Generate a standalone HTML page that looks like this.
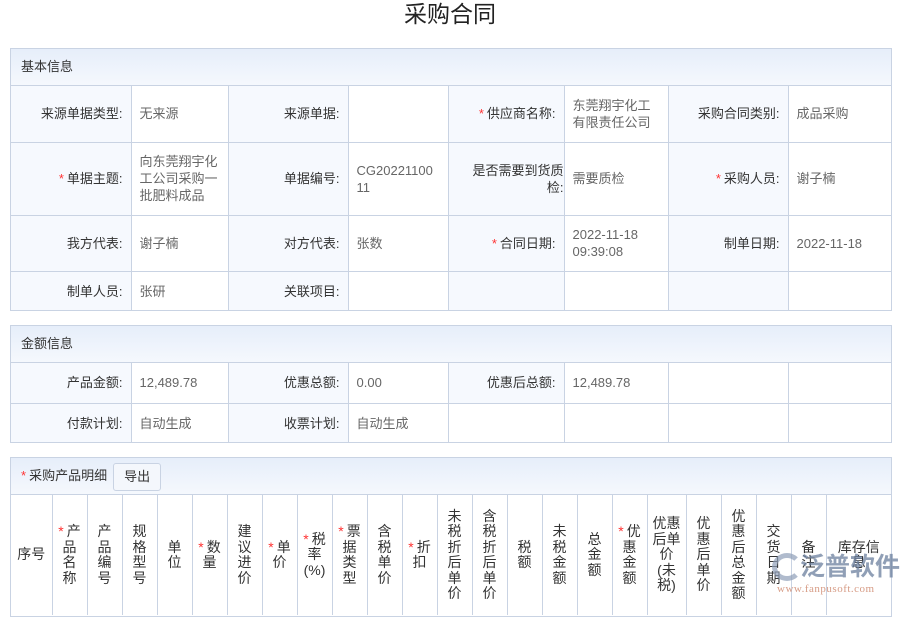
<!DOCTYPE html>
<html><head><meta charset="utf-8"><style>
*{margin:0;padding:0;box-sizing:border-box}
body{width:900px;height:600px;overflow:hidden;background:#fff;font-family:"Liberation Sans","Noto Sans CJK SC",sans-serif;font-size:13px;color:#333;position:relative}
.title{position:absolute;left:0;width:900px;top:0;text-align:center;font-size:23px;line-height:28px;color:#222}
.sec{position:absolute;left:10px;width:882px;border:1px solid #c9d3e3;background:#fff;overflow:hidden}
.hd{height:37px;line-height:36px;padding-left:10px;background:linear-gradient(#e6eefa,#f5f8fd);border-bottom:1px solid #c9d3e3;font-size:13px;color:#333}
table{border-collapse:collapse;table-layout:fixed;width:880px}
td{border:1px solid #c9d3e3;vertical-align:middle;line-height:17px}
td.l{background:#f6f9fe;text-align:right;padding-right:8px;color:#333}
td.v{background:#fff;padding-left:8px;padding-right:6px;color:#666}
tr td:first-child{border-left:none}
tr td:last-child{border-right:none}
tr:last-child td{border-bottom:none}
tr:first-child td{border-top:none}
.s{color:#f33;margin-right:3px}
.ph td{text-align:center;font-size:14px;line-height:15.5px;padding:0 4px;color:#333;height:120px;word-break:break-all}
.btn{display:inline-block;border:1px solid #c9d3e3;border-radius:3px;background:#f4f7fc;padding:0 10px;height:28px;line-height:26px;margin-left:6px;vertical-align:middle}
</style></head><body>
<div class="title">采购合同</div>

<div class="sec" style="top:48px;height:263px">
<div class="hd">基本信息</div>
<table>
<colgroup><col style="width:120px"><col style="width:97px"><col style="width:120px"><col style="width:100px"><col style="width:116px"><col style="width:104px"><col style="width:120px"><col style="width:103px"></colgroup>
<tr style="height:56px"><td class="l">来源单据类型:</td><td class="v">无来源</td><td class="l">来源单据:</td><td class="v"></td><td class="l"><span class="s">*</span>供应商名称:</td><td class="v">东莞翔宇化工有限责任公司</td><td class="l">采购合同类别:</td><td class="v">成品采购</td></tr>
<tr style="height:73px"><td class="l"><span class="s">*</span>单据主题:</td><td class="v">向东莞翔宇化工公司采购一批肥料成品</td><td class="l">单据编号:</td><td class="v" style="word-break:break-all;padding-right:12px">CG2022110011</td><td class="l" style="padding-right:0;padding-left:12px">是否需要到货质检:</td><td class="v">需要质检</td><td class="l"><span class="s">*</span>采购人员:</td><td class="v">谢子楠</td></tr>
<tr style="height:56px"><td class="l">我方代表:</td><td class="v">谢子楠</td><td class="l">对方代表:</td><td class="v">张数</td><td class="l"><span class="s">*</span>合同日期:</td><td class="v">2022-11-18 09:39:08</td><td class="l">制单日期:</td><td class="v">2022-11-18</td></tr>
<tr style="height:40px"><td class="l">制单人员:</td><td class="v">张研</td><td class="l">关联项目:</td><td class="v"></td><td class="l"></td><td class="v"></td><td class="l"></td><td class="v"></td></tr>
</table>
</div>

<div class="sec" style="top:325px;height:118px">
<div class="hd">金额信息</div>
<table>
<colgroup><col style="width:120px"><col style="width:97px"><col style="width:120px"><col style="width:100px"><col style="width:116px"><col style="width:104px"><col style="width:120px"><col style="width:103px"></colgroup>
<tr style="height:40px"><td class="l">产品金额:</td><td class="v">12,489.78</td><td class="l">优惠总额:</td><td class="v">0.00</td><td class="l">优惠后总额:</td><td class="v">12,489.78</td><td class="l" style="background:#fff"></td><td class="v"></td></tr>
<tr style="height:40px"><td class="l">付款计划:</td><td class="v">自动生成</td><td class="l">收票计划:</td><td class="v">自动生成</td><td class="l" style="background:#fff"></td><td class="v"></td><td class="l" style="background:#fff"></td><td class="v"></td></tr>
</table>
</div>

<div class="sec" style="top:457px;height:160px">
<div class="hd"><span class="s">*</span>采购产品明细<span class="btn">导出</span></div>
<table class="ph">
<colgroup><col style="width:41px"><col style="width:35px"><col style="width:35px"><col style="width:35px"><col style="width:35px"><col style="width:35px"><col style="width:35px"><col style="width:35px"><col style="width:35px"><col style="width:35px"><col style="width:35px"><col style="width:35px"><col style="width:35px"><col style="width:35px"><col style="width:35px"><col style="width:35px"><col style="width:35px"><col style="width:35px"><col style="width:39px"><col style="width:35px"><col style="width:35px"><col style="width:35px"><col style="width:35px"><col style="width:65px"></colgroup>
<tr>
<td>序号</td><td><span class="s">*</span>产品名称</td><td>产品编号</td><td>规格型号</td><td>单位</td><td><span class="s">*</span>数量</td><td>建议进价</td><td><span class="s">*</span>单价</td><td><span class="s">*</span>税率(%)</td><td><span class="s">*</span>票据类型</td><td>含税单价</td><td><span class="s">*</span>折扣</td><td>未税折后单价</td><td>含税折后单价</td><td>税额</td><td>未税金额</td><td>总金额</td><td><span class="s">*</span>优惠金额</td><td>优惠后单价(未税)</td><td>优惠后单价</td><td>优惠后总金额</td><td>交货日期</td><td>备注</td><td style="padding:0 9px">库存信息</td>
</tr></table>
</div>

<div style="position:absolute;left:772px;top:553px;width:30px;height:28px;border-radius:50%;border:5px solid #8f9fb8;border-right-color:transparent;opacity:.7"></div>
<div style="position:absolute;left:800px;top:552px;font-size:25px;font-weight:bold;color:#6b7f9e;opacity:.75;line-height:30px">泛普软件</div>
<div style="position:absolute;left:777px;top:583px;font-size:11px;font-family:'Liberation Serif',serif;color:#d08a70;opacity:.85;letter-spacing:.5px">www.fanpusoft.com</div>
</body></html>
